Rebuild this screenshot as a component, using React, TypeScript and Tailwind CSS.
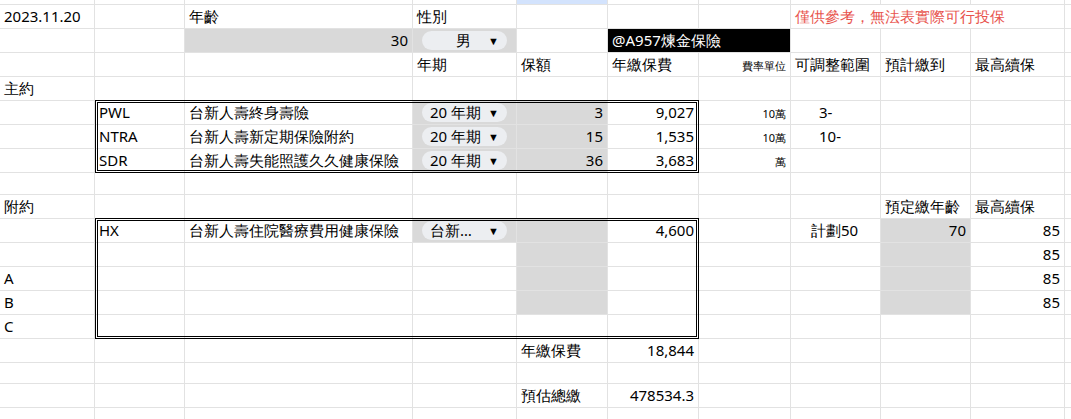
import React from 'react'

type Cell = { t?: React.ReactNode; cls?: string; span?: number }

const font = "font-['Liberation_Sans','Noto_Sans_CJK_TC',sans-serif]"

function Chip({ label, center }: { label: string; center?: boolean }) {
  return (
    <div className="mx-[5px] h-[19px] w-full rounded-full bg-[#eceef1] flex items-center px-[8px] gap-1">
      <span className={center ? 'flex-1 text-center pl-3' : 'flex-1'}>{label}</span>
      <span className="text-[11px] leading-none">▼</span>
    </div>
  )
}

const g = 'bg-[#d9d9d9]'
const r = 'justify-end'
const small = (s: string) => <span className="text-[11px] self-end pb-[2px]">{s}</span>

const E: Cell = {}
const rows: Cell[][] = [
  [E, E, E, E, { cls: 'bg-[#d3e3fd]' }, E, E, E, E, E, E],
  [{ t: '2023.11.20' }, E, { t: '年齡' }, { t: '性別' }, E, E, E,
    { t: '僅供參考，無法表實際可行投保', span: 3, cls: 'text-[#e8544e]' }, E],
  [E, E, { t: '30', cls: `${g} ${r}` }, { t: <Chip label="男" center />, cls: g }, E,
    { t: '@A957煉金保險', span: 2, cls: 'bg-black text-white' }, E, E, E, E],
  [E, E, E, { t: '年期' }, { t: '保額' }, { t: '年繳保費' }, { t: small('費率單位'), cls: r },
    { t: '可調整範圍' }, { t: '預計繳到' }, { t: '最高續保' }, E],
  [{ t: '主約' }, E, E, E, E, E, E, E, E, E, E],
  [E, { t: 'PWL' }, { t: '台新人壽終身壽險' }, { t: <Chip label="20 年期" />, cls: g }, { t: '3', cls: `${g} ${r}` },
    { t: '9,027', cls: r }, { t: small('10萬'), cls: r }, { t: '3-', cls: 'pl-[28px]' }, E, E, E],
  [E, { t: 'NTRA' }, { t: '台新人壽新定期保險附約' }, { t: <Chip label="20 年期" />, cls: g }, { t: '15', cls: `${g} ${r}` },
    { t: '1,535', cls: r }, { t: small('10萬'), cls: r }, { t: '10-', cls: 'pl-[28px]' }, E, E, E],
  [E, { t: 'SDR' }, { t: '台新人壽失能照護久久健康保險' }, { t: <Chip label="20 年期" />, cls: g }, { t: '36', cls: `${g} ${r}` },
    { t: '3,683', cls: r }, { t: small('萬'), cls: r }, E, E, E, E],
  [E, E, E, E, E, E, E, E, E, E, E],
  [{ t: '附約' }, E, E, E, E, E, E, E, { t: '預定繳年齡' }, { t: '最高續保' }, E],
  [E, { t: 'HX' }, { t: '台新人壽住院醫療費用健康保險' }, { t: <Chip label="台新…" />, cls: g }, { cls: g },
    { t: '4,600', cls: r }, E, { t: '計劃50', cls: 'pl-[20px]' }, { t: '70', cls: `${g} ${r}` }, { t: '85', cls: r }, E],
  [E, E, E, E, { cls: g }, E, E, E, { cls: g }, { t: '85', cls: r }, E],
  [{ t: 'A' }, E, E, E, { cls: g }, E, E, E, { cls: g }, { t: '85', cls: r }, E],
  [{ t: 'B' }, E, E, E, { cls: g }, E, E, E, { cls: g }, { t: '85', cls: r }, E],
  [{ t: 'C' }, E, E, E, E, E, E, E, E, E, E],
  [E, E, E, E, { t: '年繳保費' }, { t: '18,844', cls: r }, E, E, E, E, E],
  [E, E, E, E, E, E, E, E, E, E, E],
  [E, E, E, E, { t: '預估總繳' }, { t: '478534.3', cls: r }, E, E, E, E, E],
  [E, E, E, E, E, E, E, E, E, E, E],
]

export default function App() {
  return (
    <div className={`w-[1071px] h-[419px] overflow-hidden bg-white text-black text-[15px] ${font}`}>
      <div className="grid grid-cols-[95px_90px_228px_104px_91px_91px_92px_90px_90px_94px_1fr] grid-rows-[5px_repeat(7,24px)_22px_24px_repeat(6,24px)_21px_24px_24px]">
        {rows.map((row, ri) => {
          let col = 1
          return row.map((c, ci) => {
            const span = c.span ?? 1
            const start = col
            col += span
            if (start > 11) return null
            return (
              <div
                key={`${ri}-${ci}`}
                style={{ gridRow: ri + 1, gridColumn: `${start} / span ${Math.min(span, 12 - start)}` }}
                className={`flex items-center px-[4px] whitespace-nowrap overflow-hidden border-r border-b border-[#e2e2e2] ${c.cls ?? ''}`}
              >
                {c.t}
              </div>
            )
          })
        })}
        <div className="pointer-events-none col-start-2 col-span-5 row-start-6 row-span-3 border-[3px] border-double border-black -mt-px" />
        <div className="pointer-events-none col-start-2 col-span-5 row-start-11 row-span-5 border-[3px] border-double border-black -mt-px" />
      </div>
    </div>
  )
}
